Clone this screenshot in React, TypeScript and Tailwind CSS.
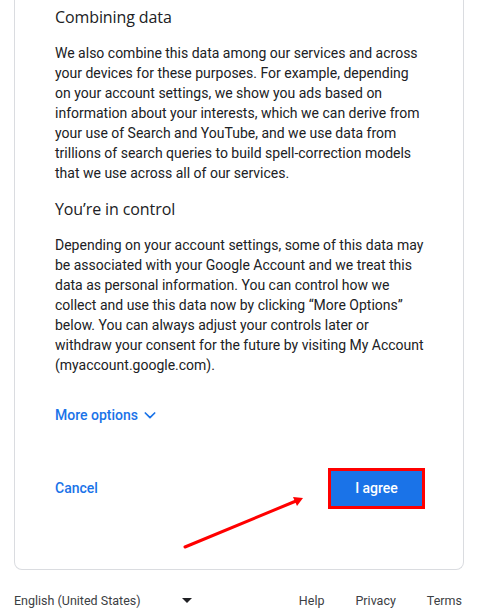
export default function App() {
  return (
    <div className="relative w-[490px] h-[615px] overflow-hidden bg-white text-[#202124] [font-family:Roboto,'Liberation_Sans',sans-serif]">
      <div className="mx-[14px] w-[450px] border-x border-b border-[#dadce0] rounded-b-lg pl-[40px] pr-[38px] pt-[5px] pb-[60px]">
        <h2 className="text-[16px] leading-6 font-medium [font-family:'Open_Sans',Roboto,sans-serif] tracking-[-0.1px]">
          Combining data
        </h2>
        <p className="mt-[14px] text-[14px] leading-5">
          We also combine this data among our services and across your devices
          for these purposes. For example, depending on your account settings,
          we show you ads based on information about your interests, which we
          can derive from your use of Search and YouTube, and we use data from
          trillions of search queries to build spell-correction models that we
          use across all of our services.
        </p>
        <h2 className="mt-[14px] text-[16px] leading-6 font-medium [font-family:'Open_Sans',Roboto,sans-serif] tracking-[-0.1px]">
          You’re in control
        </h2>
        <p className="mt-[14px] text-[14px] leading-5">
          Depending on your account settings, some of this data may be
          associated with your Google Account and we treat this data as
          personal information. You can control how we collect and use this
          data now by clicking “More Options” below. You can always adjust your
          controls later or withdraw your consent for the future by visiting My
          Account (myaccount.google.com).
        </p>
        <div className="mt-[30px] flex items-center gap-1 text-[14px] leading-5 font-medium text-[#1a73e8]">
          <span>More options</span>
          <svg width="16" height="16" viewBox="0 0 24 24" fill="none" stroke="#1a73e8" strokeWidth="2.6" strokeLinecap="round" strokeLinejoin="round">
            <path d="M5 9l7 7 7-7" />
          </svg>
        </div>
        <div className="mt-[43px] flex items-center justify-between">
          <span className="text-[14px] font-medium text-[#1a73e8]">Cancel</span>
          <div className="border-[3px] border-[#ff0000]">
            <div className="w-[91px] h-[35px] bg-[#1a73e8] text-white text-[14px] font-medium flex items-center justify-center">
              I agree
            </div>
          </div>
        </div>
      </div>
      <div className="ml-[14px] w-[449px] mt-[23px] flex items-center text-[12.5px] leading-4 text-[#3c4043]">
        <div className="flex items-center w-[168px]">
          <span>English (United States)</span>
        </div>
        <svg width="10" height="6" viewBox="0 0 10 6" className="mr-auto">
          <path d="M0 0h10L5 5z" fill="#202124" />
        </svg>
        <div className="flex gap-[31px] mr-[1px]">
          <span>Help</span>
          <span>Privacy</span>
          <span>Terms</span>
        </div>
      </div>
      <svg className="absolute left-0 top-0 pointer-events-none" width="490" height="615">
        <line x1="185" y1="547" x2="296" y2="501" stroke="#ff0000" strokeWidth="3" strokeLinecap="round" />
        <path d="M303 498 L293 497 L297 506 Z" fill="#ff0000" />
      </svg>
    </div>
  );
}
